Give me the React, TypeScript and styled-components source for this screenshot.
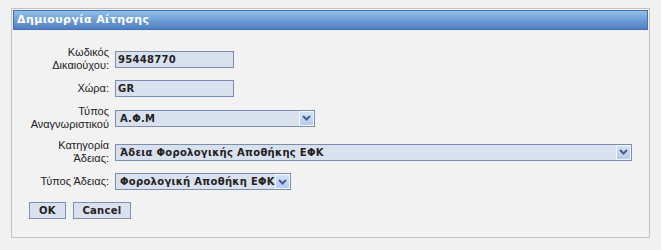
import React from 'react';
import styled, { createGlobalStyle } from 'styled-components';

const GlobalStyle = createGlobalStyle`
    body {
        margin: 0;
        background-color: #f1f1f1;
        font-family: Tahoma, "DejaVu Sans", sans-serif;
    }
`;

const Panel = styled.div`
    box-sizing: border-box;
    width: 639px;
    height: 230px;
    margin: 8px 0 0 11px;
    padding: 1px;
    border: 1px solid #c3c3c3;
    background-color: #f2f2f2;
`;

const Header = styled.div`
    box-sizing: border-box;
    height: 20px;
    padding-left: 3px;
    border: 1px solid #4370b6;
    background: linear-gradient(to bottom, #8fbfe8 0%, #6f9fd6 50%, #5080c2 100%);
    color: #ffffff;
    font-family: "DejaVu Sans", sans-serif;
    font-size: 11px;
    font-weight: bold;
    letter-spacing: 0.4px;
    line-height: 18px;
`;

const Form = styled.div`
    display: grid;
    grid-template-columns: 80px auto;
    column-gap: 6px;
    row-gap: 8px;
    align-items: center;
    justify-items: start;
    padding: 16px 0 0 16px;
`;

const Label = styled.div`
    justify-self: end;
    text-align: right;
    font-family: "Liberation Sans", Arial, sans-serif;
    font-size: 11px;
    line-height: 13px;
    color: #222222;
`;

const valueText = `
    font-family: "DejaVu Sans", sans-serif;
    font-size: 10px;
    font-weight: bold;
    letter-spacing: 0.3px;
    line-height: 15px;
    color: #222222;
`;

const TextBox = styled.div<{ $width: number }>`
    box-sizing: border-box;
    width: ${p => p.$width}px;
    height: 17px;
    padding-left: 2px;
    border: 1px solid #7d8db0;
    background-color: #d9e1ee;
    ${valueText}
`;

const SelectBox = styled.div<{ $width: number }>`
    box-sizing: border-box;
    display: flex;
    align-items: stretch;
    width: ${p => p.$width}px;
    height: 17px;
    border: 1px solid #7d8db0;
    background-color: #d9e1ee;
`;

const SelectValue = styled.span`
    flex: 1;
    padding-left: 4px;
    white-space: nowrap;
    ${valueText}
`;

const ArrowButton = styled.span`
    box-sizing: border-box;
    display: flex;
    align-items: center;
    justify-content: center;
    width: 15px;
    border: 1px solid #f4f8ff;
    background: linear-gradient(to bottom, #d3e2fa, #b4cbf2);
`;

const ButtonRow = styled.div`
    grid-column: 1 / span 2;
    display: flex;
    gap: 7px;
    margin-top: 4px;
`;

const Button = styled.button<{ $width: number }>`
    box-sizing: border-box;
    width: ${p => p.$width}px;
    height: 17px;
    padding: 0;
    border: 1px solid #7f8fb1;
    background-color: #d9e1ee;
    cursor: pointer;
    ${valueText}
`;

const Chevron = () => (
    <svg width="9" height="6" viewBox="0 0 9 6">
        <path d="M1 1 L4.5 4.5 L8 1" fill="none" stroke="#4a5d85" strokeWidth="2" />
    </svg>
);

const Select: React.FC<{ width: number, value: string }> = ({ width, value }) => (
    <SelectBox $width={width}>
        <SelectValue>{value}</SelectValue>
        <ArrowButton><Chevron /></ArrowButton>
    </SelectBox>
);

const App: React.FC = () => {
    return (
        <>
            <GlobalStyle />
            <Panel>
                <Header>Δημιουργία Αίτησης</Header>
                <Form>
                    <Label>Κωδικός Δικαιούχου:</Label>
                    <TextBox $width={119}>95448770</TextBox>

                    <Label>Χώρα:</Label>
                    <TextBox $width={119}>GR</TextBox>

                    <Label>Τύπος Αναγνωριστικού</Label>
                    <Select width={200} value="Α.Φ.Μ" />

                    <Label>Κατηγορία Άδειας:</Label>
                    <Select width={517} value="Άδεια Φορολογικής Αποθήκης ΕΦΚ" />

                    <Label>Τύπος Άδειας:</Label>
                    <Select width={176} value="Φορολογική Αποθήκη ΕΦΚ" />

                    <ButtonRow>
                        <Button $width={37}>OK</Button>
                        <Button $width={58}>Cancel</Button>
                    </ButtonRow>
                </Form>
            </Panel>
        </>
    );
};

export default App;
